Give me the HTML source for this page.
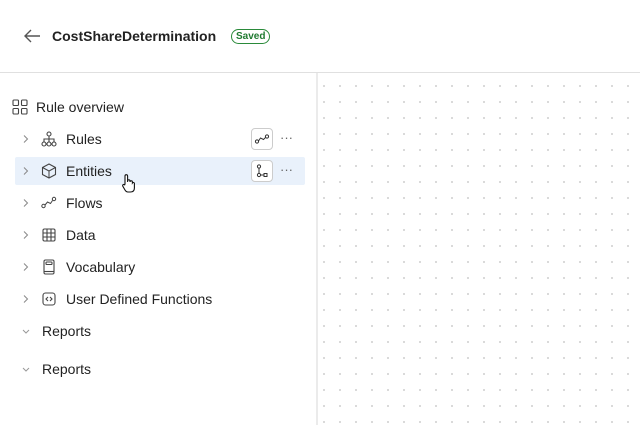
<!DOCTYPE html>
<html><head><style>
body{margin:0;width:640px;height:425px;overflow:hidden;background:#fff;font-family:"Liberation Sans",sans-serif;color:#222;position:relative}
.hdr{position:absolute;left:0;top:0;width:640px;height:72px;border-bottom:1px solid #e0e0e0}
.title{position:absolute;left:52px;top:28px;font-size:14px;font-weight:bold;color:#222;line-height:16px}
.badge{position:absolute;left:231px;top:29px;height:13px;line-height:13px;padding:0 4px;border:1px solid #2a8a3a;border-radius:8px;color:#1f7a30;font-size:10px;font-weight:bold}
.canvas{position:absolute;left:316px;top:73px;right:0;bottom:0;background-image:radial-gradient(circle,#aaa 0.6px,transparent 0.9px);background-size:16px 16px;background-position:-2px 5px;border-left:2px solid #ebebeb}
.row{position:absolute;left:15px;width:290px;height:28px;font-size:14px;line-height:28px}
.row .t{position:absolute;left:51px}
.chev{position:absolute;left:6px;top:9px}
.ic{position:absolute;left:26px;top:6px}
.sel{background:#e9f1fb;border-radius:2px}
.btn{position:absolute;left:236px;top:3px;width:22px;height:22px;border:1px solid #ccc;border-radius:4px;background:#fff;box-sizing:border-box}
.dots{position:absolute;left:265px;top:-1px;color:#666;font-size:13px}
</style></head><body>
<div class="hdr">
<svg style="position:absolute;left:23px;top:28px" width="18" height="16" viewBox="0 0 18 16"><path d="M17 8H2M8 2L2 8l6 6" stroke="#555" stroke-width="1.4" fill="none"/></svg>
<div class="title">CostShareDetermination</div>
<div class="badge">Saved</div>
</div>
<div class="canvas"></div>

<svg style="position:absolute;left:12px;top:99px" width="16" height="16" viewBox="0 0 16 16" fill="none" stroke="#444" stroke-width="1.1"><rect x="1" y="1" width="5.5" height="5.5" rx="1"/><rect x="9.5" y="1" width="5.5" height="5.5" rx="1"/><rect x="1" y="9.5" width="5.5" height="5.5" rx="1"/><rect x="9.5" y="9.5" width="5.5" height="5.5" rx="1"/></svg>
<div style="position:absolute;left:36px;top:99px;font-size:14px">Rule overview</div>

<div class="row" style="top:125px"><svg class="chev" width="10" height="10" viewBox="0 0 10 10"><path d="M3 1.5L6.5 5 3 8.5" stroke="#888" fill="none"/></svg>
<svg class="ic" width="16" height="16" viewBox="0 0 16 16" fill="none" stroke="#444" stroke-width="1.1"><circle cx="8" cy="3" r="2"/><circle cx="3" cy="13" r="2"/><circle cx="8" cy="13" r="2"/><circle cx="13" cy="13" r="2"/><path d="M8 5v6M3 11V8h10v3"/></svg>
<span class="t">Rules</span>
<div class="btn"><svg width="20" height="20" viewBox="0 0 20 20" fill="none" stroke="#333" stroke-width="1"><circle cx="5" cy="12.5" r="1.6"/><circle cx="15" cy="7.5" r="1.6"/><path d="M6.5 12l2-3 3 1.5 2-2"/></svg></div>
<span class="dots">···</span></div>

<div class="row sel" style="top:157px"><svg class="chev" width="10" height="10" viewBox="0 0 10 10"><path d="M3 1.5L6.5 5 3 8.5" stroke="#888" fill="none"/></svg>
<svg class="ic" width="16" height="16" viewBox="0 0 16 16" fill="none" stroke="#444" stroke-width="1.1"><path d="M8 1l6.5 3.5v7L8 15l-6.5-3.5v-7z"/><path d="M1.5 4.5L8 8l6.5-3.5M8 8v7" stroke-width="1"/></svg>
<span class="t">Entities</span>
<div class="btn"><svg width="20" height="20" viewBox="0 0 20 20" fill="none" stroke="#333" stroke-width="1"><circle cx="7" cy="5.5" r="1.6"/><circle cx="7" cy="14" r="1.6"/><rect x="12" y="12.5" width="3" height="3"/><path d="M7 7v5.4M8.6 14H12"/></svg></div>
<span class="dots">···</span>
<svg style="position:absolute;left:106px;top:16px" width="14" height="20" viewBox="0 0 14 20"><path d="M4 11V3a1.3 1.3 0 0 1 2.6 0v6l0-1a1.2 1.2 0 0 1 2.4 0v1a1.2 1.2 0 0 1 2.4 0v1a1.1 1.1 0 0 1 2 .3V15c0 2.5-1.5 4-4 4H7c-1.5 0-2.3-.8-3-2l-2.3-4a1.2 1.2 0 0 1 2-1.2z" fill="#fff" stroke="#111" stroke-width="1.1"/></svg>
</div>

<div class="row" style="top:189px"><svg class="chev" width="10" height="10" viewBox="0 0 10 10"><path d="M3 1.5L6.5 5 3 8.5" stroke="#888" fill="none"/></svg>
<svg class="ic" width="16" height="16" viewBox="0 0 16 16" fill="none" stroke="#444" stroke-width="1"><circle cx="2.5" cy="11" r="1.7"/><circle cx="13" cy="4" r="1.7"/><path d="M4 10l2.5-3 3 1.5 2-3"/></svg>
<span class="t">Flows</span></div>

<div class="row" style="top:221px"><svg class="chev" width="10" height="10" viewBox="0 0 10 10"><path d="M3 1.5L6.5 5 3 8.5" stroke="#888" fill="none"/></svg>
<svg class="ic" width="16" height="16" viewBox="0 0 16 16" fill="none" stroke="#444" stroke-width="1.1"><rect x="2" y="2" width="12" height="12" rx="1.5"/><path d="M6 2v12M10 2v12M2 6h12M2 10h12"/></svg>
<span class="t">Data</span></div>

<div class="row" style="top:253px"><svg class="chev" width="10" height="10" viewBox="0 0 10 10"><path d="M3 1.5L6.5 5 3 8.5" stroke="#888" fill="none"/></svg>
<svg class="ic" width="16" height="16" viewBox="0 0 16 16" fill="none" stroke="#444" stroke-width="1.1"><rect x="3" y="1" width="10" height="14" rx="1.5"/><rect x="5" y="3" width="6" height="2.5" rx="0.8"/><path d="M3 12.5h10"/></svg>
<span class="t">Vocabulary</span></div>

<div class="row" style="top:285px"><svg class="chev" width="10" height="10" viewBox="0 0 10 10"><path d="M3 1.5L6.5 5 3 8.5" stroke="#888" fill="none"/></svg>
<svg class="ic" width="16" height="16" viewBox="0 0 16 16" fill="none" stroke="#444" stroke-width="1.1"><rect x="2" y="2" width="12" height="12" rx="2.5"/><path d="M7 6L5 8l2 2M9 6l2 2-2 2"/></svg>
<span class="t">User Defined Functions</span></div>

<div class="row" style="top:317px"><svg class="chev" width="10" height="10" viewBox="0 0 10 10"><path d="M2 4l3 3 3-3" stroke="#999" fill="none"/></svg><span class="t" style="left:27px">Reports</span></div>
<div class="row" style="top:355px"><svg class="chev" width="10" height="10" viewBox="0 0 10 10"><path d="M2 4l3 3 3-3" stroke="#999" fill="none"/></svg><span class="t" style="left:27px">Reports</span></div>
</body></html>
